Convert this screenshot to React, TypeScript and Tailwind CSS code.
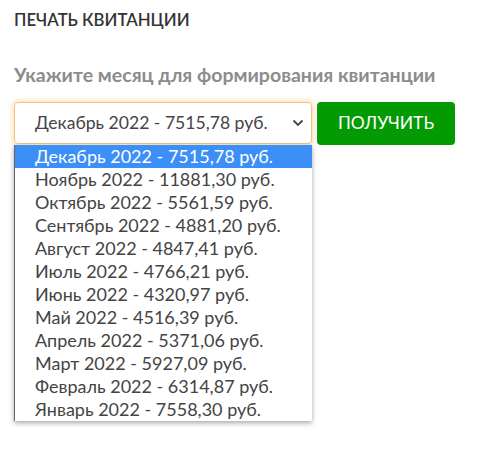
import React from "react";

const items = [
  "Декабрь 2022 - 7515,78 руб.",
  "Ноябрь 2022 - 11881,30 руб.",
  "Октябрь 2022 - 5561,59 руб.",
  "Сентябрь 2022 - 4881,20 руб.",
  "Август 2022 - 4847,41 руб.",
  "Июль 2022 - 4766,21 руб.",
  "Июнь 2022 - 4320,97 руб.",
  "Май 2022 - 4516,39 руб.",
  "Апрель 2022 - 5371,06 руб.",
  "Март 2022 - 5927,09 руб.",
  "Февраль 2022 - 6314,87 руб.",
  "Январь 2022 - 7558,30 руб.",
];

export default function App() {
  return (
    <div className="w-[479px] h-[462px] bg-white pl-[14px] pt-[10px] font-['Lato','Liberation_Sans',sans-serif]">
      <div className="text-[16.8px] leading-[20px] font-semibold text-[#333]">ПЕЧАТЬ КВИТАНЦИИ</div>
      <div className="mt-[33px] text-[19.5px] leading-[24px] font-bold text-[#8c8c8c]">
        Укажите месяц для формирования квитанции
      </div>
      <div className="mt-[15px] flex items-start gap-[5px]">
        <div className="relative">
          <div className="w-[298px] h-[42px] rounded-[4px] border border-[#f3c27e] shadow-[0_0_5px_2px_rgba(250,200,120,0.5)] flex items-center pl-[20px] pr-[7px] text-[17.6px] text-[#444]">
            <span className="flex-1">Декабрь 2022 - 7515,78 руб.</span>
            <svg width="12" height="8" viewBox="0 0 12 8">
              <path d="M1.5 1.5 L6 6 L10.5 1.5" fill="none" stroke="#444" strokeWidth="1.8" />
            </svg>
          </div>
          <div className="absolute left-0 top-[43px] w-[298px] bg-white border-l border-[#666] shadow-[0_2px_5px_rgba(0,0,0,0.35)] z-10">
            {items.map((t, i) => (
              <div
                key={t}
                className={
                  i === 0
                    ? "h-[23px] leading-[23px] pl-[20px] text-[18px] bg-[#3b8ff7] text-white"
                    : "h-[23px] leading-[23px] pl-[20px] text-[18px] text-[#444]"
                }
              >
                {t}
              </div>
            ))}
          </div>
        </div>
        <button className="w-[138px] h-[43px] rounded-[4px] bg-[#049a04] text-white text-[17.5px] flex items-center justify-center">
          ПОЛУЧИТЬ
        </button>
      </div>
    </div>
  );
}
